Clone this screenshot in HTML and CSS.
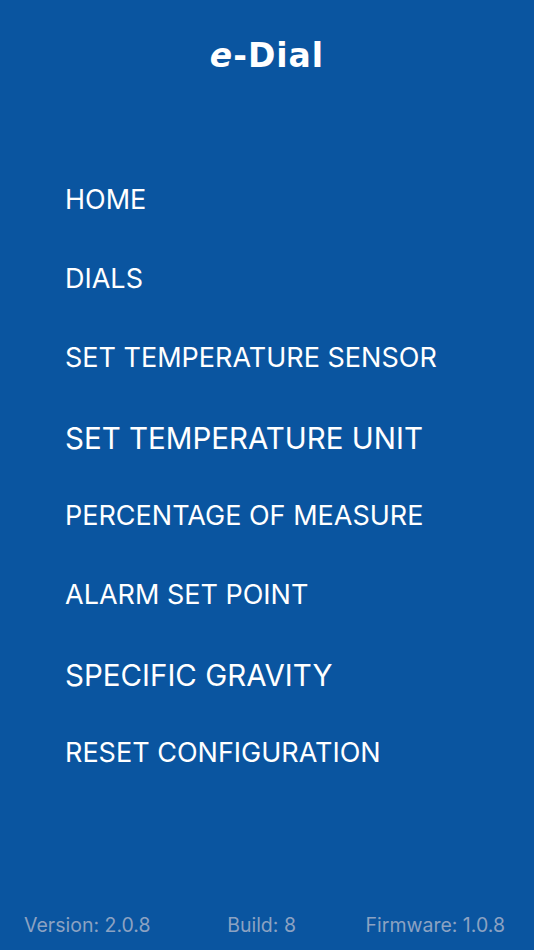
FILE: index.html
```html
<!DOCTYPE html>
<html lang="en">
<head>
<meta charset="utf-8">
<title>e-Dial</title>
<link rel="stylesheet" href="styles.css">
</head>
<body>
<div class="screen">
  <header class="title"><span class="title-e">e</span>-Dial</header>
  <nav class="menu">
    <div class="menu-item">HOME</div>
    <div class="menu-item">DIALS</div>
    <div class="menu-item">SET TEMPERATURE SENSOR</div>
    <div class="menu-item menu-item-large">SET TEMPERATURE UNIT</div>
    <div class="menu-item">PERCENTAGE OF MEASURE</div>
    <div class="menu-item">ALARM SET POINT</div>
    <div class="menu-item menu-item-large">SPECIFIC GRAVITY</div>
    <div class="menu-item">RESET CONFIGURATION</div>
  </nav>
  <footer class="footer">
    <span>Version: 2.0.8</span>
    <span class="footer-build">Build: 8</span>
    <span>Firmware: 1.0.8</span>
  </footer>
</div>
</body>
</html>
```

FILE: styles.css
```css
html, body {
  margin: 0;
  padding: 0;
}
body {
  background: #0a55a0;
}
.screen {
  width: 534px;
  height: 950px;
  background: #0a55a0;
  display: flex;
  flex-direction: column;
  color: #ffffff;
  font-family: "Inter", "Liberation Sans", sans-serif;
}
.title {
  font-family: "DejaVu Sans", "Liberation Sans", sans-serif;
  font-weight: bold;
  font-size: 33px;
  text-align: center;
  height: 56px;
  line-height: 56px;
  padding-top: 28px;
  letter-spacing: 1px;
}
.title-e {
  font-style: italic;
}
.menu {
  display: flex;
  flex-direction: column;
  padding-left: 65px;
  margin-top: 76px;
}
.menu-item {
  height: 79px;
  line-height: 79px;
  font-size: 27px;
  white-space: nowrap;
}
.menu-item-large {
  font-size: 29.5px;
  line-height: 83px;
}
.footer {
  margin-top: auto;
  display: flex;
  justify-content: space-between;
  padding: 0 29px 10px 24px;
  height: 30px;
  line-height: 30px;
  font-size: 19.5px;
  color: #8ca2c2;
}
.footer-build {
  margin-left: 7px;
}
```
